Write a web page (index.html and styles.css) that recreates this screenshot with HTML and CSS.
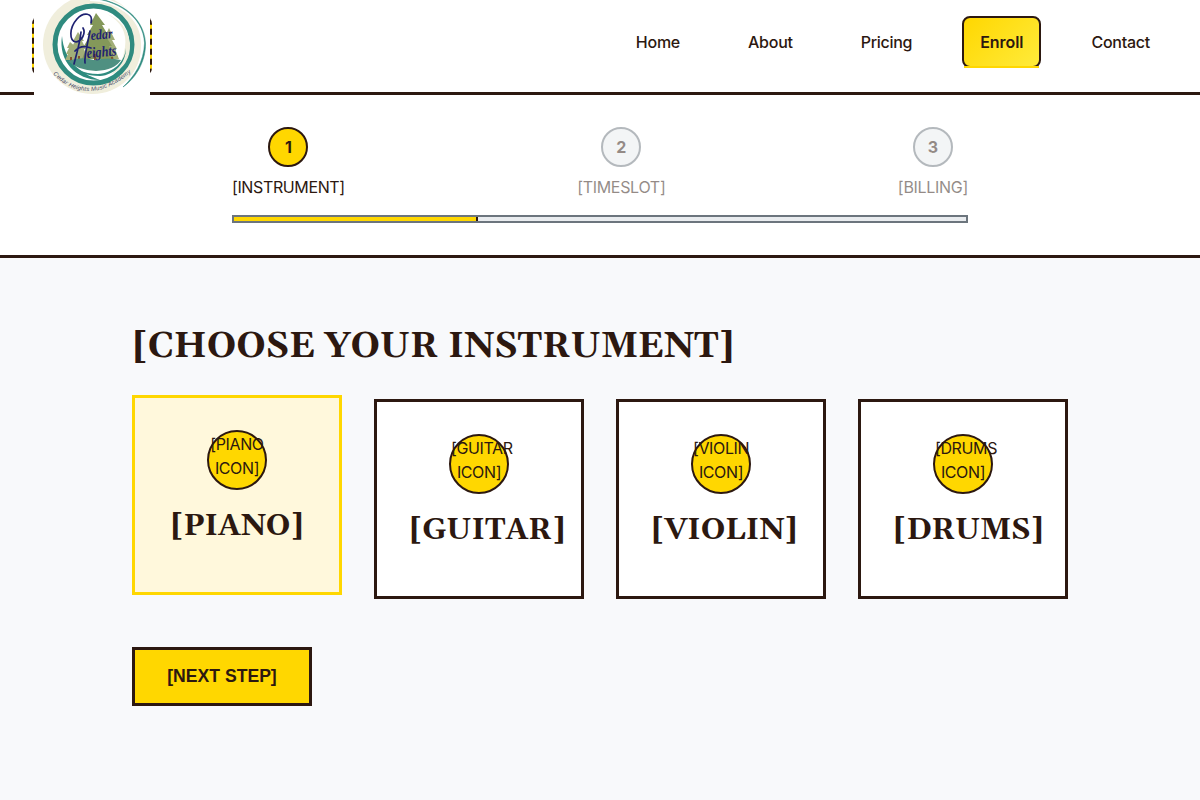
FILE: index.html
```html
<!DOCTYPE html>
<html lang="en">
<head>
<meta charset="utf-8">
<title>Enroll - Cedar Heights Music Academy</title>
<link rel="stylesheet" href="styles.css">
</head>
<body>
<header class="header">
  <a class="logo" href="#">
    <svg class="logo-image" viewBox="0 0 116 118" role="img" aria-label="Cedar Heights Music Academy">
      <rect width="116" height="118" fill="#fff"/>
      <circle cx="58.500" cy="62.500" r="49.500" fill="#f0eedc"/>
      <path d="M56 17C82 17 108 33 109 61C110 80 101 96 89 105" fill="none" stroke="#fff" stroke-width="4"/>
      <path d="M53 16C82 16 110 33 111.500 61C112 80 101 97 89 105C100 95 110 80 110.500 61C109.500 34 82 17 53 16Z" fill="#2f8b7f" stroke="#2f8b7f" stroke-width=".5"/>
      <circle cx="59.500" cy="62.500" r="38.500" fill="#fff" stroke="#2f8b7f" stroke-width="5"/>
      <path d="M73 32Q94 43 91 65Q89 83 76 93Q97 84 96 61Q93 40 73 32Z" fill="#f0eedc"/>
      <path d="M28 54C24 79 42 98 66 98C45 91 30 78 28 54Z" fill="#2f8b7f"/>
      <path d="M92 66C91 80 79 91 64 92C50 92 38 86 33 77C42 91 53 94 66 94C81 93 92 81 92 66Z" fill="#2f8b7f"/>
      <path d="M36 60l-3 6h2l-3 6h2l-3 6h14l-3-7h2l-4-6h2zM44 50l-5 9h2l-4 8h3l-4 10h18l-4-10h2l-4-8h2zM75 46l-6 12h2l-5 9h3l-5 10h21l-4-10h2l-5-9h3z" fill="#a2ae78"/>
      <path d="M62 31l-6 12h3l-6 10h3l-6 11h3l-5 13h32l-5-13h3l-7-11h3l-6-10h3z" fill="#84985a"/>
      <path d="M37 75v5M45 74v6M61 72v8M78 75v4" stroke="#85502c" stroke-width="2"/>
      <path d="M34 79Q47 74 60 78Q75 75 87 78Q81 88 62 89Q43 88 34 79Z" fill="#4f9081"/>
      <g fill="none" stroke="#1f2272" stroke-linecap="round" stroke-width="1.700">
        <path d="M57 41C60 30 49 30 43 37C35 46 35 59 42 60C48 59 52 51 49 46M47 50C46 61 42 74 40 82M56 49C54 60 50 74 51 81M41 69Q47 62 57 66"/>
      </g>
      <g class="logo-script">
        <text x="57" y="58" font-size="14" textLength="22" lengthAdjust="spacingAndGlyphs" transform="rotate(-5 57 58)">edar</text>
        <text x="53" y="76" font-size="15" textLength="30" lengthAdjust="spacingAndGlyphs" transform="rotate(-5 53 76)">eights</text>
      </g>
      <path id="logo-arc" d="M19 92Q54 128 100 88" fill="none"/>
      <text class="logo-caption"><textPath href="#logo-arc" textLength="88">Cedar Heights Music Academy</textPath></text>
    </svg>
  </a>
  <nav class="nav">
    <a class="nav-link" href="#">Home</a>
    <a class="nav-link" href="#">About</a>
    <a class="nav-link nav-link-pricing" href="#">Pricing</a>
    <a class="nav-link nav-link-active" href="#">Enroll</a>
    <a class="nav-link" href="#">Contact</a>
  </nav>
</header>
<section class="progress">
  <div class="progress-inner">
    <div class="steps">
      <div class="step"><div class="step-number step-number-active">1</div><div>[INSTRUMENT]</div></div>
      <div class="step step-inactive"><div class="step-number">2</div><div>[TIMESLOT]</div></div>
      <div class="step step-inactive"><div class="step-number">3</div><div>[BILLING]</div></div>
    </div>
    <div class="bar"><div class="bar-fill"></div></div>
  </div>
</section>
<main class="main">
  <h1 class="title">[CHOOSE YOUR INSTRUMENT]</h1>
  <div class="cards">
    <div class="card card-selected"><div class="card-icon">[PIANO ICON]</div><h2 class="card-title">[PIANO]</h2></div>
    <div class="card"><div class="card-icon">[GUITAR ICON]</div><h2 class="card-title">[GUITAR]</h2></div>
    <div class="card"><div class="card-icon">[VIOLIN ICON]</div><h2 class="card-title">[VIOLIN]</h2></div>
    <div class="card"><div class="card-icon">[DRUMS ICON]</div><h2 class="card-title">[DRUMS]</h2></div>
  </div>
  <button class="next">[NEXT STEP]</button>
</main>
</body>
</html>
```
FILE: styles.css
```css
* { box-sizing: border-box; margin: 0; padding: 0; }
body {
  min-height: 100vh;
  background: #f8f9fb;
  color: #2c1810;
  font: 16px/24px Inter, sans-serif;
  letter-spacing: -.38px;
}
.header {
  display: flex;
  justify-content: space-between;
  align-items: flex-start;
  height: 95px;
  padding: 16px 32px;
  background: #fff;
  border-bottom: 3px solid #2c1810;
}
.logo {
  position: relative;
  width: 120px;
  height: 60px;
  background: #ffd700;
  border: 2px dashed #2c1810;
  border-radius: 8px;
  letter-spacing: 0;
}
.logo-image {
  position: absolute;
  top: -36px;
  left: 0;
  width: 116px;
  height: 118px;
}
.logo-script {
  fill: #1f2272;
  font-family: "Liberation Serif", serif;
  font-style: italic;
  font-weight: 700;
}
.logo-caption {
  fill: #444866;
  font: italic 6px "Liberation Sans", sans-serif;
}
.nav { display: flex; gap: 32px; }
.nav-link {
  position: relative;
  padding: 12px 16px;
  border: 2px solid transparent;
  border-radius: 8px;
  color: #2c1810;
  font-weight: 500;
  letter-spacing: -.25px;
  text-decoration: none;
}
.nav-link-pricing { letter-spacing: -.3px; }
.nav-link-active {
  background: linear-gradient(135deg, #ffd700, #ffeb3b);
  border-color: #2c1810;
  font-weight: 600;
  letter-spacing: -.05px;
}
.nav-link-active::after {
  content: "";
  position: absolute;
  right: 0;
  bottom: -2px;
  left: 0;
  height: 2px;
  background: #ffd700;
}
.progress {
  padding: 32px 0;
  background: #fff;
  border-bottom: 3px solid #2c1810;
}
.progress-inner { width: 736px; margin: 0 auto; }
.steps { display: flex; justify-content: space-between; margin-bottom: 16px; }
.step { display: flex; flex-direction: column; align-items: center; gap: 8px; }
.step-inactive { opacity: .5; letter-spacing: -.3px; }
.step-number {
  display: flex;
  justify-content: center;
  align-items: center;
  width: 40px;
  height: 40px;
  background: #e9ecef;
  border: 2px solid #6c757d;
  border-radius: 50%;
  font-weight: 700;
  letter-spacing: 0;
}
.step-number-active { background: #ffd700; border-color: #2c1810; }
.bar { height: 8px; background: #e9ecef; border: 2px solid #6c757d; }
.bar-fill {
  width: 33.33%;
  height: 100%;
  background: #ffd700;
  border-right: 2px solid #2c1810;
}
.main { width: 936px; margin: 0 auto; padding-top: 64px; }
.title {
  margin-bottom: 28px;
  font: 700 36px/49px Georgia, Gelasio, "Liberation Serif", serif;
  letter-spacing: 0;
}
.cards {
  display: grid;
  grid-template-columns: repeat(4, 210px);
  gap: 32px;
  margin-bottom: 48px;
}
.card {
  height: 200px;
  padding: 32px;
  background: #fff;
  border: 3px solid #2c1810;
  text-align: center;
}
.card-selected {
  background: #fff8dc;
  border-color: #ffd700;
  transform: translateY(-4px);
}
.card-icon {
  width: 60px;
  height: 60px;
  margin: 0 auto 16px;
  background: #ffd700;
  border: 2px solid #2c1810;
  border-radius: 50%;
}
.card-title {
  font: 700 30px/40px Georgia, Gelasio, "Liberation Serif", serif;
  letter-spacing: 0;
}
.next {
  width: 180px;
  height: 59px;
  background: #ffd700;
  border: 3px solid #2c1810;
  color: #2c1810;
  font: 700 17.6px "Liberation Sans", Arial, sans-serif;
}
```
